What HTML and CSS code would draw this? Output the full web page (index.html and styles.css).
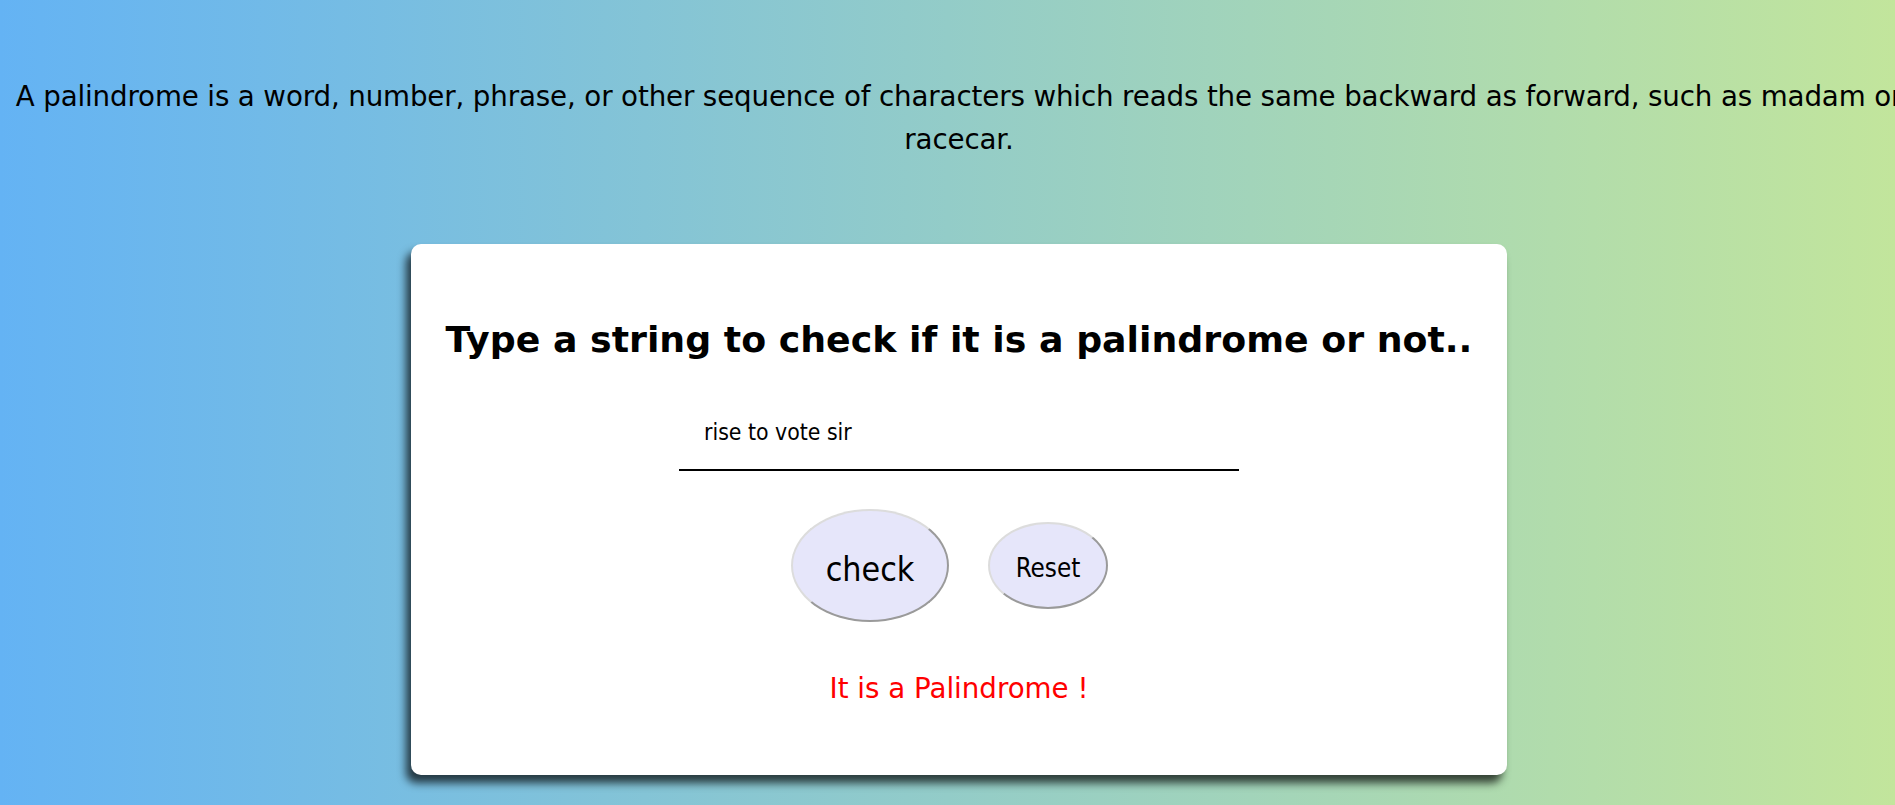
FILE: index.html
```html
<!DOCTYPE html>
<html lang="en">
<head>
<meta charset="utf-8">
<title>Palindrome Checker</title>
<link rel="stylesheet" href="styles.css">
</head>
<body>
  <div class="page">
    <p class="intro">A palindrome is a word, number, phrase, or other sequence of characters which reads the same backward as forward, such as madam or racecar.</p>
    <div class="card">
      <h1 class="title">Type a string to check if it is a palindrome or not..</h1>
      <input class="field" type="text" value="rise to vote sir">
      <div class="actions">
        <button class="btn btn-check" type="button">check</button>
        <button class="btn btn-reset" type="button">Reset</button>
      </div>
      <p class="result">It is a Palindrome !</p>
    </div>
  </div>
</body>
</html>
```

FILE: styles.css
```css
html {
  overflow: hidden;
}

body {
  margin: 0;
  width: 1918px;
  height: 805px;
  background: linear-gradient(to right, #64b3f4, #c2e59c);
  font-family: "Comic Sans MS", "DejaVu Sans", sans-serif;
  overflow: hidden;
}

.page {
  width: 1902px;
  margin: 0 8px;
  padding-top: 75px;
}

.intro {
  margin: 0;
  text-align: center;
  font-size: 27.7px;
  line-height: 43px;
  letter-spacing: -0.13px;
  color: #000;
}

.card {
  width: 1096px;
  box-sizing: border-box;
  margin: 83px auto 0;
  padding: 74px 0 70px;
  background: #fff;
  border-radius: 10px;
  box-shadow: -5px 8px 8px rgba(0, 0, 0, 0.7);
  text-align: center;
}

.title {
  margin: 0;
  font-size: 36.3px;
  line-height: 44px;
  font-weight: bold;
  color: #000;
}

.field {
  display: block;
  width: 560px;
  height: 59px;
  box-sizing: border-box;
  margin: 50px auto 0;
  padding: 0 24px 17px 25px;
  border: none;
  border-bottom: 2px solid #000;
  outline: none;
  background: transparent;
  font-family: "DejaVu Sans Condensed", "DejaVu Sans", sans-serif;
  font-stretch: condensed;
  font-size: 22.8px;
  color: #000;
}

.actions {
  display: flex;
  justify-content: center;
  align-items: center;
  gap: 39px;
  margin-top: 38px;
  padding-right: 19px;
}

.btn {
  display: flex;
  align-items: center;
  justify-content: center;
  box-sizing: border-box;
  margin: 0;
  border-radius: 50%;
  border: 2px solid;
  border-color: #dcdcdc #9a9a9a #9a9a9a #dcdcdc;
  background: #e6e6fa;
  color: #000;
  font-family: "DejaVu Sans Condensed", "DejaVu Sans", sans-serif;
  font-stretch: condensed;
  cursor: pointer;
}

.btn-check {
  width: 158px;
  height: 113px;
  padding: 7px 0 0;
  font-size: 33.7px;
}

.btn-reset {
  width: 120px;
  height: 87px;
  padding: 5px 0 0;
  font-size: 25.8px;
}

.result {
  margin: 50px 0 0;
  font-size: 27.7px;
  color: #ff0000;
}
```
